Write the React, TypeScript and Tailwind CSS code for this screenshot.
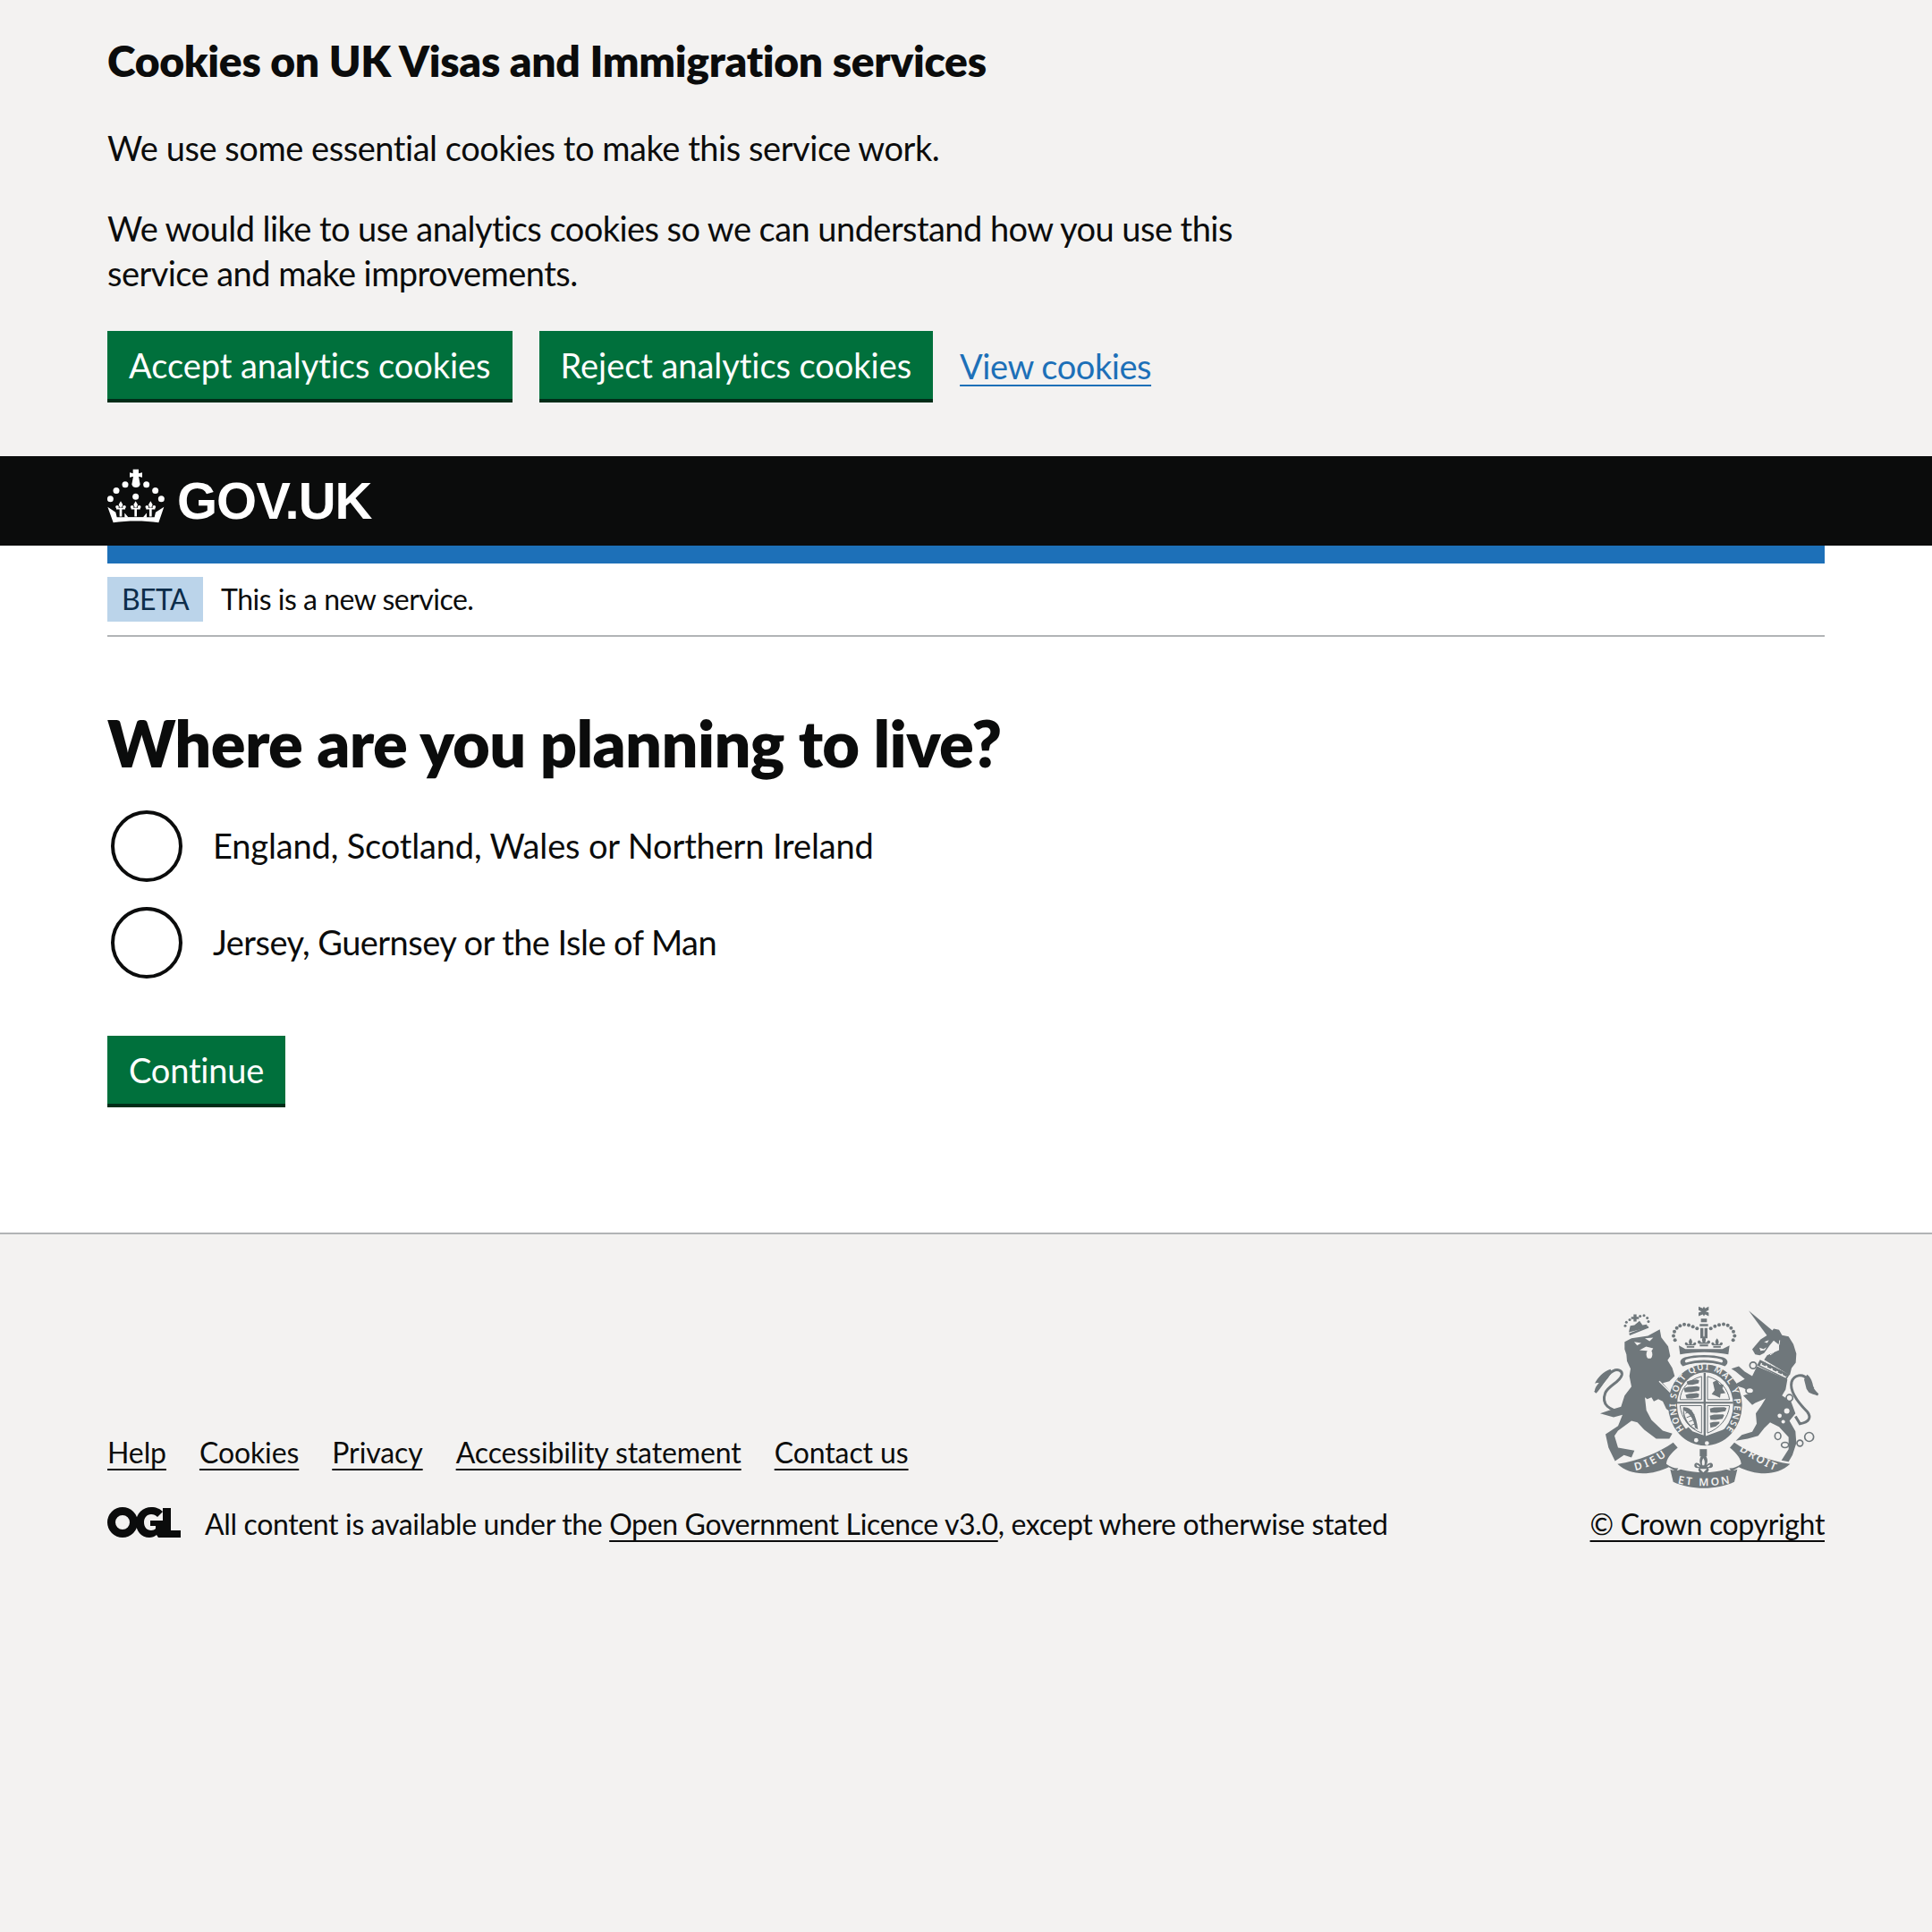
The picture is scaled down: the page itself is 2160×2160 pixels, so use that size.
import React from "react";

const font = { fontFamily: 'Lato, "Noto Sans", sans-serif' };

function Crown() {
  return (
    <svg viewBox="60 70 192 182" width="64" height="61" className="mb-3 shrink-0" fill="#fff">
      <path d="M146 72h19v13l12-3v17l-12-3 5 26a14.500 14.500 0 0 1-28 0l5-26-12 3V82l11 3z" />
      {[[120,123],[191,123],[90,143],[221,143],[70,171],[241,171],[155,163]].map(([x, y], i) => (
        <circle key={i} cx={x} cy={y} r="10.500" />
      ))}
      {[105, 155, 205].map((x) => (
        <g key={x}>
          <path d={`M${x} 178l7 12-4 9h-6l-4-9z`} />
          <circle cx={x - 12} cy={198} r="5.500" />
          <circle cx={x + 12} cy={198} r="5.500" />
          <path d={`M${x - 15} 201h30v5h-30zM${x - 4} 200h8v30h-8z`} />
        </g>
      ))}
      <path d="M61 198l27 18 4 16h126l4-16 28-18-18 52c-48-7-104-7-152 0z" />
      <path d="M118 218l12 14h50l12-14v16h-74z" />
    </svg>
  );
}

function OglLogo() {
  return (
    <svg viewBox="0 0 82 34" width="82" height="34" className="mb-1 shrink-0" fill="#0b0c0c">
      <path fillRule="evenodd" d="M17 0a17 17 0 1 0 0 34 17 17 0 0 0 0-34zm0 9a8 8 0 1 1 0 16 8 8 0 0 1 0-16z" />
      <path d="M49 0c6 0 10 2 13 5l-6 6c-2-2-4-3-7-3-5 0-8 4-8 9s3 9 8 9c2 0 4-1 5-2v-3h-6v-6h14v19h-5l-2-3c-2 2-5 3-8 3-9 0-15-7-15-17S40 0 49 0z" />
      <path d="M62 1h9v25h11v8H62z" />
    </svg>
  );
}

function Fleur({ x, y, s = 1 }: { x: number; y: number; s?: number }) {
  return (
    <path
      transform={`translate(${x} ${y}) scale(${s})`}
      d="M0-22c7 8 8 14 4 22h6c0-5 6-9 10-5 3 4 0 9-5 10H-15c-5-1-8-6-5-10 4-4 10 0 10 5h6C-8-8-7-14 0-22zM-14 7h28v6h-28z"
    />
  );
}

function Arms() {
  const c = "#6f777b";
  const bg = "#f3f2f1";
  return (
    <svg viewBox="60 60 780 620" width="260" height="207" className="shrink-0">
      <g fill={c}>
        {/* Lion tail */}
        <path d="M165 412c-44 0-72-22-58-60 10-26 50-36 56-62 2-14-14-20-30-12-24 12-34 44-60 72" fill="none" stroke={c} strokeWidth="9" />
        <path d="M72 350c-2-12 6-24 14-32-6-2-10 0-14 2 10-20 28-40 52-48l6 8-14 22-20 24z" />
        {/* Lion body */}
        <path d="M172 180l23-12 55-8 40-22 5 27 23 30 7 33-9 14 16 26 8 27-18 17-22 6 45 52 7 38-17 12-23-15-12-25-15-8-15 8-8-14-14 6-8-6 5 44 17 32 38 36 32 10-10 17-44 0-40-30-23-25-20-5-45 33-12 17 12 40 55 10-10 23-25-8-30 20-22-45-10-45 42-28 15-37-30 8-45-13 35-12 35-10 12-38 23-30-7-35 4-25-12-25-2-23-6-17z" />
        {/* Lion face */}
        <ellipse cx="255" cy="222" rx="10" ry="14" fill={bg} />
        <path d="M204 180l24 4-14 8zM240 168l28-2-12 12zM222 208l22-12 24 6-8 12-14-4z" fill={bg} />
        <path d="M288 312l50 50" stroke={bg} strokeWidth="4" fill="none" />
        {/* Lion crown */}
        <path d="M186 148l5-22 14-2 17-14 10 14 14-2 4 10z" />
        <path d="M188 155l64-25" stroke={c} strokeWidth="7" />
        <path d="M202 88h10v8h8v8h-8v8h-10v-8h-8v-8h8z" />
        {[[174,126],[178,114],[189,106],[224,94],[237,92],[248,100],[252,112]].map(([x, y], i) => (
          <circle key={i} cx={x} cy={y} r="4.500" />
        ))}
        {/* Unicorn tail */}
        <path d="M820 358c-20-18-30-38-35-53-15-20-45-15-53 10-7 30 23 70 53 100 15 20 5 35-25 40l-15-25" fill="none" stroke={c} strokeWidth="9" />
        <path d="M822 360c-14-2-24-6-32-10l-8-12-8-32 10-16c8 4 14 16 18 28 2 8 2 12 6 16l-4 4z" />
        {/* Unicorn */}
        <path d="M588 75l84 71-20 16z" />
        <path d="M660 152l12-16 18 4 10 18 22 4 16 26 10 32-2 30-14 18-6 24-86-52 10-15 40-17 0-18-18-14-12 14-20 28-15 7-15-3-10-17 28-33z" />
        <path d="M616 262l102 44-6 34-12 20 30 20 15 40-20 25 20 35 3 40-13 40-13 22-24-4 24-38 0-40-32-35-30-15-20 20-20 25-35 10-40 7 20-20 35-10 15-27-3-35 18-25 15-25-35 15-10 7-30-32 15-5 15-3-30-17-32-10 37-20-30-25-15-10 25-8 20 18 25 15z" />
        <path d="M692 175c0 20-12 37-32 49" stroke={bg} strokeWidth="3" fill="none" />
        <path d="M624 200l14 4 10-6-6 10-14 2z" fill={bg} />
        <path d="M640 180l16-6-6 10z" fill={bg} />
        {/* Collar */}
        <path d="M626 240l99 50-10 17-99-48z" />
        <path d="M630 251l86 43-4 7-86-42z" fill={bg} />
        {[[642,246],[660,255],[678,264],[696,273],[712,281]].map(([x, y], i) => (
          <path key={i} d="M-7 9l1-12 3 6 3-8 3 8 3-6 1 12z" transform={`translate(${x} ${y + 5}) rotate(27)`} />
        ))}
        <g fill={bg}>
          <circle cx="716" cy="412" r="9" />
          <circle cx="692" cy="428" r="7" />
          <circle cx="704" cy="448" r="6" />
        </g>
        <g fill="none" stroke={c} strokeWidth="5">
          <circle cx="603" cy="259" r="11" fill={bg} />
          <ellipse cx="592" cy="344" rx="13" ry="10" fill={bg} />
          <circle cx="725" cy="368" r="11" fill={bg} />
          <ellipse cx="686" cy="496" rx="10" ry="12" />
          <ellipse cx="710" cy="526" rx="12" ry="9" />
          <circle cx="760" cy="520" r="10" />
          <circle cx="791" cy="499" r="15" />
        </g>
        {/* Crown */}
        <path d="M420 62l14 6 4-6 4 6 12-6v12l-10 4 10 4v12l-12-6-4 6-4-6-14 6V82l10-4-10-4z" />
        <path d="M428 102h20v12h-20zM424 120h28v8h-28z" />
        <path d="M426 134h10v34h-10zM440 134h10v34h-10z" />
        {[[341,174],[336,160],[339,146],[347,134],[358,126],[372,122],[387,124],[401,129],[415,135],[461,135],[475,128],[489,123],[504,121],[518,125],[529,134],[537,146],[541,160],[536,174]].map(([x, y], i) => (
          <circle key={i} cx={x} cy={y} r="6" />
        ))}
        <Fleur x={393} y={188} s={0.9} />
        <Fleur x={438} y={182} s={1} />
        <Fleur x={482} y={188} s={0.9} />
        <path d="M354 192l22 12 124 0 24-12-4 30c-50-10-112-10-162 0z" />
        <path d="M368 262c-14-10-12-24 6-30 36-10 92-10 128 0 18 6 20 20 6 30-40-16-100-16-140 0z" />
        <path d="M378 250c-6-4-4-10 4-12 32-8 80-8 112 0 8 2 10 8 4 12-38-12-82-12-120 0z" fill={bg} />
        {/* Garter */}
        <ellipse cx="442" cy="392" rx="124" ry="136" />
        <ellipse cx="442" cy="392" rx="94" ry="110" fill={bg} />
        {/* Quarters */}
        <path d="M437 284h7v214h-7zM348 381h188v6H348z" />
        <path d="M358 374c2-36 26-66 72-78v78z" fill="none" stroke={c} strokeWidth="3" />
        <path d="M450 296c44 12 68 42 74 78h-74z" fill="none" stroke={c} strokeWidth="3" />
        <path d="M358 394h72v92c-42-16-68-50-72-92z" fill="none" stroke={c} strokeWidth="3" />
        <path d="M450 394h74c-4 42-32 76-74 92z" fill="none" stroke={c} strokeWidth="3" />
        {/* Lions passant */}
        <path d="M380 314l12-5 22-3 8 3-2 10-20 5-16 0zM370 336l14-5 30-2 10 3-2 12-26 5-22 0zM376 358l12-4 26-2 8 3-2 11-22 4-18 0z" />
        <path d="M458 404l14-4 34-1 8 3-4 11-30 5-20-1zM458 428l14-4 30-1 4 3-6 12-24 4-16-1zM458 452l12-3 20-1 0 5-12 11-18 4z" />
        <path d="M468 316l14-8 8 14 14 2-4 12 10 16-16 2-2 14-16-8-12-4 10-14z" />
        {/* Harp */}
        <path d="M368 400c26-4 44 22 50 74l-10-6c-4-30-18-48-38-58z" />
        <path d="M370 402c2 34 16 56 40 70l-4 2c-24-14-40-36-38-72z" />
        <path d="M376 420l22 -10M380 434l26-10M388 448l20-8M396 460l14-6" stroke={c} strokeWidth="3" />
        {/* Buckle */}
        <path d="M360 486l26-20 14 14 44 16 60-22 18 10-52 32-42 10-36-14z" />
        <circle cx="412" cy="510" r="7" fill={bg} />
        <circle cx="448" cy="520" r="7" fill={bg} />
        {/* Fleur */}
        <path d="M424 540h24v24h-24z" />
        <path d="M436 552c14 14 18 28 10 42 8-8 18-12 22-2 2 10-8 14-16 10 6 8 0 18-14 22-16-2-22-14-16-22-8 4-18 0-16-10 4-10 14-6 22 2-8-14-4-28 8-42z" />
        <path d="M436 570c5 8 6 16 3 24h-6c-3-8-2-16 3-24zM412 592c6 0 10 4 12 8l-8-1zM460 592c-6 0-10 4-12 8l8-1zM424 606h24l-12 12z" fill={bg} />
        {/* Ribbons */}
        <path d="M148 590c72-10 142-40 187-72l15 17c-25 20-38 40-38 55 13 10 28 15 40 14l-7 11-25-15c-50 25-125 35-172-10z" />
        <path d="M325 608c10 4 25 6 35 0 50 14 105 14 155 0 10 6 25 4 35 0l-10 42c-60 28-145 28-205 0z" />
        <path d="M727 590c-72-10-142-40-187-72l-15 17c25 20 38 40 38 55-13 10-28 15-40 14l7 11 25-15c50 25 125 35 172-10z" />
      </g>
      <defs>
        <path id="rg" d="M372 474A98 118 0 1 1 512 474" />
        <path id="r1" d="M208 612c37-7 77-27 107-52" />
        <path id="r2" d="M350 654c50 12 126 12 176 0" />
        <path id="r3" d="M556 546c40 22 76 50 120 66" />
      </defs>
      <g fill={bg} fontFamily='"Noto Sans", sans-serif' fontWeight="600">
        <text fontSize="30"><textPath href="#rg" textLength="516" lengthAdjust="spacing">HONI SOIT QUI MAL Y PENSE</textPath></text>
        <text fontSize="36"><textPath href="#r1" textLength="116" lengthAdjust="spacing">DIEU</textPath></text>
        <text fontSize="36"><textPath href="#r2" textLength="176" lengthAdjust="spacing">ET MON</textPath></text>
        <text fontSize="36"><textPath href="#r3" textLength="136" lengthAdjust="spacing">DROIT</textPath></text>
      </g>
    </svg>
  );
}

function GreenButton({ children, tracking }: { children: React.ReactNode; tracking: string }) {
  return (
    <button className={`h-20 border-b-4 border-[#002d18] bg-[#00703c] px-6 text-[38px] leading-[50px] text-white ${tracking}`}>
      {children}
    </button>
  );
}

function Radio({ label, tracking }: { label: string; tracking: string }) {
  return (
    <div className="flex h-20 items-center">
      <span className="ml-1 h-20 w-20 shrink-0 rounded-full border-4 border-[#0b0c0c] bg-white" />
      <span className={`ml-[34px] pb-[2px] text-[38px] leading-[50px] text-[#0b0c0c] ${tracking}`}>{label}</span>
    </div>
  );
}

const footerLink = "underline decoration-2 underline-offset-[6px]";

export default function App() {
  return (
    <div
      className="flex min-h-[2160px] flex-col bg-white tracking-[-0.45px] text-[#0b0c0c] [font-variant-ligatures:none]"
      style={font}
    >
      <section className="h-[510px] bg-[#f3f2f1] px-[120px] pt-[38px]">
        <h2 className="mb-[42px] text-[48px] font-extrabold leading-[60px] tracking-[-0.3px]">Cookies on UK Visas and Immigration services</h2>
        <p className="mb-10 text-[38px] leading-[50px]">We use some essential cookies to make this service work.</p>
        <p className="mb-10 w-[1280px] text-[38px] leading-[50px] tracking-[-0.55px]">
          We would like to use analytics cookies so we can understand how you use this service and make improvements.
        </p>
        <div className="flex items-center gap-[30px]">
          <GreenButton tracking="tracking-[-0.05px]">Accept analytics cookies</GreenButton>
          <GreenButton tracking="tracking-[-0.05px]">Reject analytics cookies</GreenButton>
          <a className="-mt-[2px] text-[38px] leading-[50px] text-[#1d70b8] underline decoration-2 underline-offset-[6px]" href="#">
            View cookies
          </a>
        </div>
      </section>

      <header className="flex h-[100px] items-center bg-[#0b0c0c] px-[120px]">
        <Crown />
        <span
          className="ml-[14px] text-[58px] font-bold leading-none tracking-[-1px] text-white"
          style={{ fontFamily: '"Liberation Sans", sans-serif' }}
        >
          GOV.UK
        </span>
      </header>

      <div className="mx-[120px]">
        <div className="h-5 bg-[#1d70b8]" />
        <div className="flex h-[82px] items-center border-b-2 border-[#b1b4b6]">
          <strong className="h-[50px] bg-[#bbd4ea] px-4 text-[32px] font-normal leading-[50px] tracking-[-0.6px] text-[#0c2d4a]">BETA</strong>
          <span className="ml-5 text-[32px] leading-10 tracking-[-0.5px]">This is a new service.</span>
        </div>
      </div>

      <main className="h-[666px] px-[120px] pt-[78px]">
        <h1 className="mb-9 text-[72px] font-extrabold leading-[80px] tracking-[-0.65px]">Where are you planning to live?</h1>
        <div className="flex flex-col gap-7">
          <Radio label="England, Scotland, Wales or Northern Ireland" tracking="tracking-[-0.15px]" />
          <Radio label="Jersey, Guernsey or the Isle of Man" tracking="tracking-[-0.55px]" />
        </div>
        <div className="mt-16">
          <GreenButton tracking="tracking-[-0.2px]">Continue</GreenButton>
        </div>
      </main>

      <footer className="flex-1 border-t-2 border-[#b1b4b6] bg-[#f3f2f1] px-[120px] pt-20 tracking-[-0.35px]">
        <div className="flex items-end justify-between">
          <div>
            <ul className="mb-10 flex gap-[37px] text-[32px] leading-10 tracking-[-0.1px]">
              {["Help", "Cookies", "Privacy", "Accessibility statement", "Contact us"].map((t) => (
                <li key={t}>
                  <a className={footerLink} href="#">{t}</a>
                </li>
              ))}
            </ul>
            <div className="flex items-center text-[32px] leading-10">
              <OglLogo />
              <span className="ml-[27px]">
                All content is available under the{" "}
                <a className={footerLink} href="#">Open Government Licence v3.0</a>, except where otherwise stated
              </span>
            </div>
          </div>
          <div className="flex flex-col items-center">
            <Arms />
            <a className={`mt-[17px] text-[32px] leading-10 ${footerLink}`} href="#">© Crown copyright</a>
          </div>
        </div>
      </footer>
    </div>
  );
}
